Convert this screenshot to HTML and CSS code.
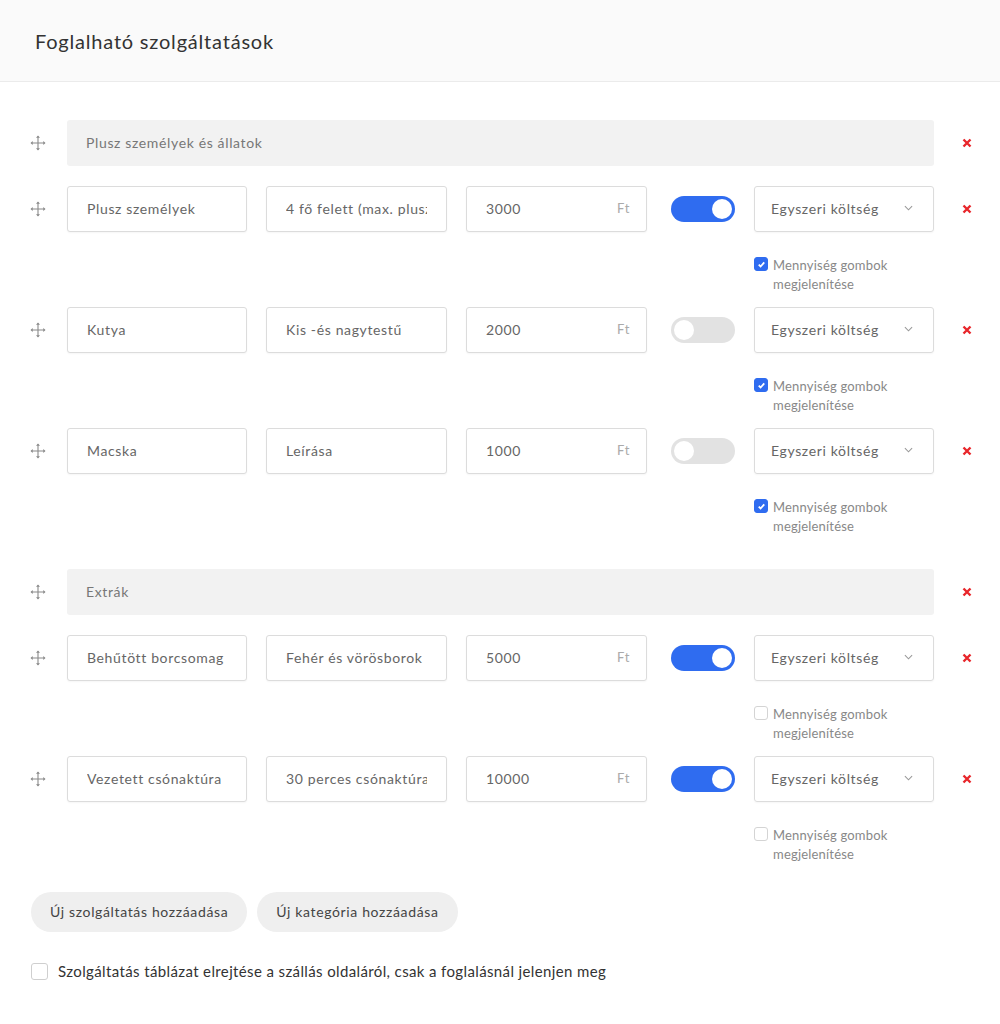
FILE: index.html
```html
<!DOCTYPE html>
<html>

<head>
    <meta charset="utf-8" />
    <meta name="viewport" content="width=device-width, initial-scale=1.0">
    <title>Foglalható szolgáltatások</title>
    <link rel="stylesheet" href="styles.css">
</head>

<body>
    <div class="header">
        <h1>Foglalható szolgáltatások</h1>
    </div>

    <div class="content">
        <!-- first category -->
        <div class="group">
            <div class="line">
                <span class="drag"><svg viewBox="0 0 16 16"><path d="M8 1.5v13M1.5 8h13" /><path class="tip" d="M8 0.5l-2 2.2h4zM8 15.5l-2-2.2h4zM0.5 8l2.2-2v4zM15.5 8l-2.2-2v4z" /></svg></span>
                <input class="category" type="text" value="Plusz személyek és állatok">
                <span class="remove"><svg viewBox="0 0 10 10"><path d="M1.5 1.5l7 7M8.5 1.5l-7 7" /></svg></span>
            </div>

            <div class="line">
                <span class="drag"><svg viewBox="0 0 16 16"><path d="M8 1.5v13M1.5 8h13" /><path class="tip" d="M8 0.5l-2 2.2h4zM8 15.5l-2-2.2h4zM0.5 8l2.2-2v4zM15.5 8l-2.2-2v4z" /></svg></span>
                <input class="field" type="text" value="Plusz személyek">
                <input class="field" type="text" value="4 fő felett (max. plusz 4 fő)">
                <div class="price"><input class="field" type="text" value="3000"><span class="unit">Ft</span></div>
                <div class="switch on"><span class="knob"></span></div>
                <div class="select">Egyszeri költség<svg viewBox="0 0 10 6"><path d="M1 1l4 4 4-4" /></svg></div>
                <span class="remove"><svg viewBox="0 0 10 10"><path d="M1.5 1.5l7 7M8.5 1.5l-7 7" /></svg></span>
                <label class="qty"><span class="box checked"><svg viewBox="0 0 12 12"><path d="M3 6.2l2 2 4-4.4" /></svg></span><span>Mennyiség gombok megjelenítése</span></label>
            </div>

            <div class="line">
                <span class="drag"><svg viewBox="0 0 16 16"><path d="M8 1.5v13M1.5 8h13" /><path class="tip" d="M8 0.5l-2 2.2h4zM8 15.5l-2-2.2h4zM0.5 8l2.2-2v4zM15.5 8l-2.2-2v4z" /></svg></span>
                <input class="field" type="text" value="Kutya">
                <input class="field" type="text" value="Kis -és nagytestű">
                <div class="price"><input class="field" type="text" value="2000"><span class="unit">Ft</span></div>
                <div class="switch"><span class="knob"></span></div>
                <div class="select">Egyszeri költség<svg viewBox="0 0 10 6"><path d="M1 1l4 4 4-4" /></svg></div>
                <span class="remove"><svg viewBox="0 0 10 10"><path d="M1.5 1.5l7 7M8.5 1.5l-7 7" /></svg></span>
                <label class="qty"><span class="box checked"><svg viewBox="0 0 12 12"><path d="M3 6.2l2 2 4-4.4" /></svg></span><span>Mennyiség gombok megjelenítése</span></label>
            </div>

            <div class="line">
                <span class="drag"><svg viewBox="0 0 16 16"><path d="M8 1.5v13M1.5 8h13" /><path class="tip" d="M8 0.5l-2 2.2h4zM8 15.5l-2-2.2h4zM0.5 8l2.2-2v4zM15.5 8l-2.2-2v4z" /></svg></span>
                <input class="field" type="text" value="Macska">
                <input class="field" type="text" value="Leírása">
                <div class="price"><input class="field" type="text" value="1000"><span class="unit">Ft</span></div>
                <div class="switch"><span class="knob"></span></div>
                <div class="select">Egyszeri költség<svg viewBox="0 0 10 6"><path d="M1 1l4 4 4-4" /></svg></div>
                <span class="remove"><svg viewBox="0 0 10 10"><path d="M1.5 1.5l7 7M8.5 1.5l-7 7" /></svg></span>
                <label class="qty"><span class="box checked"><svg viewBox="0 0 12 12"><path d="M3 6.2l2 2 4-4.4" /></svg></span><span>Mennyiség gombok megjelenítése</span></label>
            </div>
        </div>

        <!-- second category -->
        <div class="group">
            <div class="line">
                <span class="drag"><svg viewBox="0 0 16 16"><path d="M8 1.5v13M1.5 8h13" /><path class="tip" d="M8 0.5l-2 2.2h4zM8 15.5l-2-2.2h4zM0.5 8l2.2-2v4zM15.5 8l-2.2-2v4z" /></svg></span>
                <input class="category" type="text" value="Extrák">
                <span class="remove"><svg viewBox="0 0 10 10"><path d="M1.5 1.5l7 7M8.5 1.5l-7 7" /></svg></span>
            </div>

            <div class="line">
                <span class="drag"><svg viewBox="0 0 16 16"><path d="M8 1.5v13M1.5 8h13" /><path class="tip" d="M8 0.5l-2 2.2h4zM8 15.5l-2-2.2h4zM0.5 8l2.2-2v4zM15.5 8l-2.2-2v4z" /></svg></span>
                <input class="field" type="text" value="Behűtött borcsomag">
                <input class="field" type="text" value="Fehér és vörösborok">
                <div class="price"><input class="field" type="text" value="5000"><span class="unit">Ft</span></div>
                <div class="switch on"><span class="knob"></span></div>
                <div class="select">Egyszeri költség<svg viewBox="0 0 10 6"><path d="M1 1l4 4 4-4" /></svg></div>
                <span class="remove"><svg viewBox="0 0 10 10"><path d="M1.5 1.5l7 7M8.5 1.5l-7 7" /></svg></span>
                <label class="qty"><span class="box"></span><span>Mennyiség gombok megjelenítése</span></label>
            </div>

            <div class="line">
                <span class="drag"><svg viewBox="0 0 16 16"><path d="M8 1.5v13M1.5 8h13" /><path class="tip" d="M8 0.5l-2 2.2h4zM8 15.5l-2-2.2h4zM0.5 8l2.2-2v4zM15.5 8l-2.2-2v4z" /></svg></span>
                <input class="field" type="text" value="Vezetett csónaktúra">
                <input class="field" type="text" value="30 perces csónaktúra">
                <div class="price"><input class="field" type="text" value="10000"><span class="unit">Ft</span></div>
                <div class="switch on"><span class="knob"></span></div>
                <div class="select">Egyszeri költség<svg viewBox="0 0 10 6"><path d="M1 1l4 4 4-4" /></svg></div>
                <span class="remove"><svg viewBox="0 0 10 10"><path d="M1.5 1.5l7 7M8.5 1.5l-7 7" /></svg></span>
                <label class="qty"><span class="box"></span><span>Mennyiség gombok megjelenítése</span></label>
            </div>
        </div>

        <div class="actions">
            <button class="pill">Új szolgáltatás hozzáadása</button>
            <button class="pill">Új kategória hozzáadása</button>
        </div>

        <label class="hide-table"><span class="box big"></span><span>Szolgáltatás táblázat elrejtése a szállás oldaláról, csak a foglalásnál jelenjen meg</span></label>
    </div>
</body>

</html>
```

FILE: styles.css
```css
body {
    margin: 0;
    padding: 0;
    background: #fff;
    font-family: Lato, "Open Sans", sans-serif;
    letter-spacing: 0.04em;
    color: #333;
}

.header {
    height: 81px;
    background: #fafafa;
    border-bottom: 1px solid #ebebeb;
    display: flex;
    align-items: center;
    padding-left: 35px;
}

.header h1 {
    margin: 0;
    font-size: 20px;
    font-weight: 400;
    color: #333;
    letter-spacing: 0.8px;
}

.content {
    padding: 38px 0 0 30px;
}

.group + .group {
    margin-top: 20px;
}

.line {
    display: grid;
    grid-template-columns: 18px 180px 181px 181px 69px 180px 28px;
    column-gap: 19px;
    align-items: center;
    padding-bottom: 13px;
}

.line:first-child {
    padding-bottom: 20px;
}

.drag {
    display: flex;
    width: 16px;
    height: 16px;
}

.drag svg {
    width: 16px;
    height: 16px;
}

.drag path {
    stroke: #8a8a8a;
    stroke-width: 1.1;
    fill: none;
}

.drag path.tip {
    stroke: none;
    fill: #8a8a8a;
}

.remove {
    display: flex;
    justify-content: center;
}

.remove svg {
    width: 10px;
    height: 10px;
}

.remove path {
    stroke: #e8262b;
    stroke-width: 2.4;
    fill: none;
}

input {
    font-family: inherit;
    letter-spacing: inherit;
    outline: none;
}

.category {
    grid-column: 2 / 7;
    height: 46px;
    box-sizing: border-box;
    border: none;
    border-radius: 3px;
    background: #f2f2f2;
    padding: 0 19px 2px;
    font-size: 14px;
    color: #777;
}

.field {
    width: 100%;
    height: 46px;
    box-sizing: border-box;
    border: 1px solid #dcdcdc;
    border-radius: 3px;
    background: #fff;
    padding: 0 19px 2px;
    font-size: 14px;
    color: #666;
    box-shadow: 0 1px 2px rgba(0, 0, 0, 0.04);
}

.price {
    position: relative;
}

.price .field {
    padding-right: 44px;
}

.unit {
    position: absolute;
    right: 17px;
    top: 14px;
    font-size: 13px;
    color: #aaa;
}

.switch {
    justify-self: end;
    width: 64px;
    height: 26px;
    border-radius: 13px;
    background: #e2e2e2;
    display: flex;
    align-items: center;
    padding: 0 3px;
    box-sizing: border-box;
}

.switch .knob {
    width: 20px;
    height: 20px;
    border-radius: 50%;
    background: #fff;
}

.switch.on {
    background: #2f6cf0;
    justify-content: flex-end;
}

.select {
    height: 46px;
    box-sizing: border-box;
    border: 1px solid #dcdcdc;
    border-radius: 3px;
    box-shadow: 0 1px 2px rgba(0, 0, 0, 0.04);
    display: flex;
    align-items: center;
    justify-content: space-between;
    padding: 0 20px 2px 16px;
    font-size: 14px;
    color: #666;
}

.select svg {
    width: 9px;
    height: 6px;
}

.select path {
    stroke: #999;
    stroke-width: 1.2;
    fill: none;
}

.qty {
    grid-column: 6;
    margin-top: 24px;
    display: flex;
    align-items: flex-start;
    gap: 5px;
    font-size: 13px;
    line-height: 19px;
    letter-spacing: 0.015em;
    color: #888;
    padding-right: 30px;
}

.box {
    flex: none;
    width: 14px;
    height: 14px;
    margin-top: 1px;
    box-sizing: border-box;
    border: 1px solid #d4d4d4;
    border-radius: 3px;
    background: #fff;
    display: flex;
    align-items: center;
    justify-content: center;
}

.box.checked {
    background: #2f6cf0;
    border-color: #2f6cf0;
}

.box svg {
    width: 11px;
    height: 11px;
}

.box path {
    stroke: #fff;
    stroke-width: 2;
    fill: none;
}

.actions {
    display: flex;
    gap: 10px;
    margin-top: 15px;
    padding-left: 1px;
}

.pill {
    height: 40px;
    border: none;
    border-radius: 20px;
    background: #efefef;
    padding: 0 19px 2px;
    font-family: inherit;
    letter-spacing: inherit;
    font-size: 14px;
    color: #444;
}

.hide-table {
    display: flex;
    align-items: center;
    gap: 10px;
    margin-top: 30px;
    padding-left: 1px;
    font-size: 15px;
    letter-spacing: 0.025em;
    color: #333;
}

.box.big {
    width: 17px;
    height: 17px;
    margin-top: 0;
    border-color: #cfcfcf;
}
```
